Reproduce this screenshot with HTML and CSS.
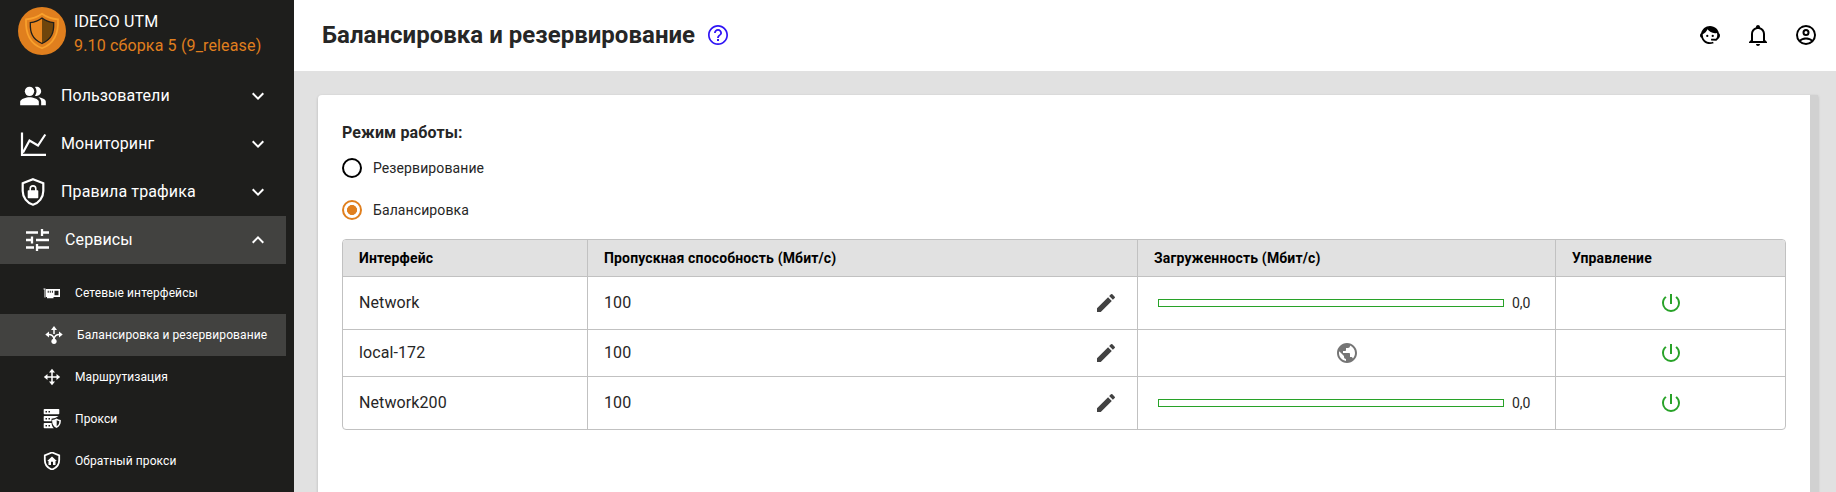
FILE: index.html
```
<!DOCTYPE html>
<html lang="ru">
<head>
<meta charset="utf-8">
<title>Балансировка и резервирование</title>
<link rel="stylesheet" href="styles.css">
</head>
<body>
<div class="app">
  <aside class="sidebar">
    <div class="brand">
      <svg class="logo" width="48" height="48" viewBox="0 0 48 48">
        <circle cx="24" cy="24" r="24" fill="#e07f1e"/>
        <path d="M24 6.800C19 10.500 14 12 8 12.300C7.500 23 9.500 36 24 41.300C38.500 36 40.500 23 40 12.300C34 12 29 10.500 24 6.800Z" fill="#e07f1e" stroke="#f9a12c" stroke-width="1.700"/>
        <path d="M24 11C20 14.200 16.500 15.300 12.300 15.700C12 25 14 32.500 24 36.500Z" fill="#e8861f"/>
        <path d="M24 11C28 14.200 31.500 15.300 35.700 15.700C36 25 34 32.500 24 36.500Z" fill="#6f450c"/>
        <path d="M24 11C20 14.200 16.500 15.300 12.300 15.700C12 25 14 32.500 24 36.500C34 32.500 36 25 35.700 15.700C31.500 15.300 28 14.200 24 11Z" fill="none" stroke="#1e1e1c" stroke-width="1.300"/>
      </svg>
      <div class="brand-text">
        <div class="brand-name">IDECO UTM</div>
        <div class="brand-version">9.10 сборка 5 (9_release)</div>
      </div>
    </div>
    <nav class="menu">
      <a class="item">
        <svg class="item-icon" viewBox="0 0 24 24"><path d="M16.670 13.130C18.040 14.060 19 15.320 19 17v3h4v-3c0-2.180-3.570-3.470-6.330-3.870zM15 12c2.210 0 4-1.790 4-4s-1.790-4-4-4c-.470 0-.910.100-1.330.240C14.500 5.270 15 6.580 15 8s-.5 2.730-1.330 3.760c.420.140.860.240 1.330.240z"/><circle cx="9" cy="8" r="4"/><path d="M9 13c-2.670 0-8 1.340-8 4v3h16v-3c0-2.660-5.330-4-8-4z"/></svg>
        <span class="item-label">Пользователи</span>
        <svg class="chevron" viewBox="0 0 24 24"><path d="M7.410 8.580L12 13.170l4.590-4.590L18 10l-6 6-6-6z"/></svg>
      </a>
      <a class="item">
        <svg class="item-icon" viewBox="0 0 28 28"><path class="line" d="M3 2.500V24.800H27M4 22.500L10.500 10.500L19 15.500L26.300 4.500" /></svg>
        <span class="item-label">Мониторинг</span>
        <svg class="chevron" viewBox="0 0 24 24"><path d="M7.410 8.580L12 13.170l4.590-4.590L18 10l-6 6-6-6z"/></svg>
      </a>
      <a class="item">
        <svg class="item-icon" viewBox="0 0 28 28"><path class="line" d="M14 1.300L24.300 5.300V13C24.300 19.500 20 25 14 26.800C8 25 3.700 19.500 3.700 13V5.300Z"/><path d="M18.500 12.200h-.9v-1.500a3.600 3.600 0 0 0-7.200 0v1.500h-.9a.8.8 0 0 0-.8.8v6.500c0 .5.300.8.8.8h9c.5 0 .8-.3.800-.8V13a.8.8 0 0 0-.8-.8zm-6.500 0v-1.500a2 2 0 0 1 4 0v1.500z"/></svg>
        <span class="item-label">Правила трафика</span>
        <svg class="chevron" viewBox="0 0 24 24"><path d="M7.410 8.580L12 13.170l4.590-4.590L18 10l-6 6-6-6z"/></svg>
      </a>
      <a class="item open">
        <svg class="item-icon tune" viewBox="0 0 28 28"><path class="line tune-line" d="M3 6.500h12M19 6.500h7M19 3v7M3 14h7M9 10.500v7M13 14h13M3 21.500h8M14 18v7M14 21.500h12"/></svg>
        <span class="item-label">Сервисы</span>
        <svg class="chevron" viewBox="0 0 24 24"><path d="M7.410 15.410L12 10.830l4.590 4.580L18 14l-6-6-6 6z"/></svg>
      </a>
    </nav>
    <nav class="submenu">
      <a class="sub">
        <svg class="sub-icon" viewBox="0 0 18 18"><path d="M.5 4.500h2v9H1.500v-8h-1z"/><path fill-rule="evenodd" d="M3 5h14v8h-6.500v1.200H4V13H3zM4.700 6.800v2h1v-2zM6.800 6.800v2h1v-2zM8.900 6.800v2h1v-2zM11.500 6.700v4.600h4V6.700z"/></svg>
        <span class="sub-label">Сетевые интерфейсы</span>
      </a>
      <a class="sub current">
        <svg class="sub-icon" viewBox="0 0 18 18"><path d="M9 0l3 4H6zM.3 8.500L4 5.500v6zM17.700 8.500L14 5.500v6z"/><path class="line thin" d="M9 3v5M3 8.500C6.500 8.300 9 10 9 14C9 10 11.500 8.300 15 8.500"/><circle cx="9" cy="15.300" r="2.600"/></svg>
        <span class="sub-label">Балансировка и резервирование</span>
      </a>
      <a class="sub">
        <svg class="sub-icon" viewBox="0 0 18 18"><path d="M9 .8l3 3.700H6zM9 17.200l3-3.700H6zM.8 9l3.700-3v6zM17.200 9l-3.700-3v6z"/><path class="line thin" d="M9 3v12M3 9h12"/></svg>
        <span class="sub-label">Маршрутизация</span>
      </a>
      <a class="sub">
        <svg class="sub-icon server" viewBox="0 0 18 20"><path fill-rule="evenodd" d="M1.500 0h14a.8.8 0 0 1 .8.8v3.700a.8.8 0 0 1-.8.800h-14a.8.8 0 0 1-.8-.8V.8A.8.8 0 0 1 1.500 0zM2.500 1.900v1.500H4V1.900zM5.500 1.900v1.500H7V1.900z"/><path fill-rule="evenodd" d="M1.500 7h14l-2 1.200c-2 1.200-4 1.200-5 1.600v2.500h-7a.8.8 0 0 1-.8-.8V7.800A.8.8 0 0 1 1.500 7zM2.500 8.900v1.500H4V8.900zM5.500 8.900v1.500H7V8.900zM1.500 14h7c.2 2.200 1 4 2.300 5.200h-9.300a.8.8 0 0 1-.8-.8v-3.600a.8.8 0 0 1 .8-.8zM2.500 15.900v1.500H4v-1.500zM5.500 15.900v1.500H7v-1.500z"/><path fill-rule="evenodd" d="M13.500 9.500c1.300.8 2.600 1.200 4.300 1.400.3 3.600-.8 6.500-4.300 8.100-3.500-1.600-4.600-4.500-4.300-8.100 1.700-.2 3-.6 4.300-1.400zm.2 1.700v6c1.900-1 2.600-2.700 2.600-5-.9-.2-1.800-.5-2.600-1z"/></svg>
        <span class="sub-label">Прокси</span>
      </a>
      <a class="sub">
        <svg class="sub-icon" viewBox="0 0 18 18"><path class="line shield" d="M9 .5L16.200 3.300V8C16.200 12.700 13 16.200 9 17.500C5 16.200 1.800 12.700 1.800 8V3.300Z"/><path d="M9 4.500L13.800 9h-1.300v4H10V9.800H8V13H5.500V9H4.200z"/></svg>
        <span class="sub-label">Обратный прокси</span>
      </a>
    </nav>
  </aside>

  <main class="main">
    <header class="topbar">
      <h1 class="title">Балансировка и резервирование</h1>
      <svg class="icon help" viewBox="0 0 24 24"><path d="M11 18h2v-2h-2v2zm1-16C6.480 2 2 6.480 2 12s4.480 10 10 10 10-4.480 10-10S17.520 2 12 2zm0 18.300c-4.600 0-8.300-3.700-8.300-8.300S7.400 3.700 12 3.700s8.300 3.700 8.300 8.300-3.700 8.300-8.300 8.300zM12 6c-2.210 0-4 1.790-4 4h1.800c0-1.200.9-2.200 2.200-2.200s2.200 1 2.200 2.200c0 2-3.100 1.800-3.100 5h1.800c0-2.200 3.100-2.500 3.100-5 0-2.210-1.790-4-4-4z"/></svg>
      <div class="actions">
        <svg class="icon" viewBox="0 0 24 24"><path d="M18.720 14.760C19.070 13.910 19.260 13 19.260 12C19.260 11.280 19.150 10.590 18.960 9.950C18.310 10.100 17.630 10.180 16.920 10.180C13.860 10.180 11.150 8.670 9.500 6.340C8.610 8.500 6.910 10.260 4.770 11.220C4.730 11.470 4.730 11.740 4.730 12A7.270 7.270 0 0 0 12 19.270C13.050 19.270 14.060 19.040 14.970 18.630C15.540 19.720 15.800 20.260 15.780 20.260C14.140 20.810 12.870 21.080 12 21.080C9.580 21.080 7.270 20.130 5.570 18.420C4.530 17.380 3.760 16.110 3.330 14.730Q2 14.400 2 12.500Q2 10.600 3.090 10.180C3.930 6.040 7.600 2.920 12 2.920C14.400 2.920 16.710 3.870 18.420 5.580C19.690 6.840 20.540 8.450 20.890 10.180Q22 10.600 22 12.500Q22 14.400 20.900 15.200L18.380 17.700L13.080 17.400V15.730H17.910Z"/><circle cx="9.270" cy="12.910" r="1.130"/><circle cx="14.720" cy="12.910" r="1.130"/></svg>
        <svg class="icon" viewBox="0 0 24 24"><path d="M10 21h4c0 1.100-.9 2-2 2s-2-.9-2-2zM21 19v1H3v-1l2-2v-6c0-3.100 2.030-5.830 5-6.710V4c0-1.100.9-2 2-2s2 .9 2 2v.290c2.970.880 5 3.610 5 6.710v6l2 2zm-4-8c0-2.760-2.240-5-5-5s-5 2.240-5 5v7h10v-7z"/></svg>
        <svg class="icon" viewBox="0 0 24 24"><path fill-rule="evenodd" d="M12 2a10 10 0 1 0 0 20 10 10 0 0 0 0-20zM7.070 18.280c.430-.9 3.050-1.780 4.930-1.780s4.510.880 4.930 1.780A7.900 7.900 0 0 1 12 20c-1.860 0-3.570-.640-4.930-1.720zm11.290-1.450c-1.430-1.740-4.900-2.330-6.360-2.330s-4.930.590-6.360 2.330A7.950 7.950 0 0 1 4 12c0-4.410 3.590-8 8-8s8 3.590 8 8c0 1.820-.620 3.490-1.640 4.830zM12 6a3.500 3.500 0 1 0 0 7 3.500 3.500 0 0 0 0-7zm0 5a1.500 1.500 0 1 1 0-3 1.500 1.500 0 0 1 0 3z"/></svg>
      </div>
    </header>
    <div class="content">
      <section class="card">
        <h2 class="mode-title">Режим работы:</h2>
        <div class="radio"><span class="dot"></span>Резервирование</div>
        <div class="radio"><span class="dot checked"></span>Балансировка</div>
        <div class="table">
          <div class="row head">
            <div class="cell">Интерфейс</div><div class="cell">Пропускная способность (Мбит/с)</div><div class="cell">Загруженность (Мбит/с)</div><div class="cell">Управление</div>
          </div>
          <div class="row">
            <div class="cell"><span class="value">Network</span></div>
            <div class="cell speed"><span class="value">100</span><svg class="icon edit" viewBox="0 0 24 24"><path d="M3 17.250V21h3.750L17.810 9.940l-3.750-3.750L3 17.250zM20.710 7.040a1 1 0 0 0 0-1.410l-2.340-2.340a1 1 0 0 0-1.410 0l-1.830 1.830 3.750 3.750 1.830-1.830z"/></svg></div>
            <div class="cell load"><span class="bar"></span>0,0</div>
            <div class="cell control"><svg class="icon power" viewBox="0 0 24 24"><path d="M13 3h-2v10h2V3zm4.830 2.170l-1.420 1.420A6.920 6.920 0 0 1 19 12c0 3.870-3.130 7-7 7s-7-3.130-7-7c0-2.190 1.010-4.140 2.580-5.420L6.170 5.170A8.930 8.930 0 0 0 3 12a9 9 0 0 0 18 0c0-2.740-1.230-5.180-3.170-6.830z"/></svg></div>
          </div>
          <div class="row short">
            <div class="cell"><span class="value">local-172</span></div>
            <div class="cell speed"><span class="value">100</span><svg class="icon edit" viewBox="0 0 24 24"><path d="M3 17.250V21h3.750L17.810 9.940l-3.750-3.750L3 17.250zM20.710 7.040a1 1 0 0 0 0-1.410l-2.340-2.340a1 1 0 0 0-1.410 0l-1.830 1.830 3.750 3.750 1.830-1.830z"/></svg></div>
            <div class="cell control"><svg class="icon globe" viewBox="0 0 24 24"><path d="M12 2C6.480 2 2 6.480 2 12s4.480 10 10 10 10-4.480 10-10S17.520 2 12 2zm-1 17.930c-3.950-.490-7-3.850-7-7.930 0-.620.080-1.210.210-1.790L9 15v1c0 1.100.9 2 2 2v1.930zm6.900-2.540c-.260-.810-1-1.390-1.900-1.390h-1v-3c0-.550-.450-1-1-1H8v-2h2c.550 0 1-.450 1-1V7h2c1.100 0 2-.9 2-2v-.410c2.930 1.190 5 4.060 5 7.410 0 2.080-.8 3.970-2.100 5.390z"/></svg></div>
            <div class="cell control"><svg class="icon power" viewBox="0 0 24 24"><path d="M13 3h-2v10h2V3zm4.830 2.170l-1.420 1.420A6.920 6.920 0 0 1 19 12c0 3.870-3.130 7-7 7s-7-3.130-7-7c0-2.190 1.010-4.140 2.580-5.420L6.170 5.170A8.930 8.930 0 0 0 3 12a9 9 0 0 0 18 0c0-2.740-1.230-5.180-3.170-6.830z"/></svg></div>
          </div>
          <div class="row">
            <div class="cell"><span class="value">Network200</span></div>
            <div class="cell speed"><span class="value">100</span><svg class="icon edit" viewBox="0 0 24 24"><path d="M3 17.250V21h3.750L17.810 9.940l-3.750-3.750L3 17.250zM20.710 7.040a1 1 0 0 0 0-1.410l-2.340-2.340a1 1 0 0 0-1.410 0l-1.830 1.830 3.750 3.750 1.830-1.830z"/></svg></div>
            <div class="cell load"><span class="bar"></span>0,0</div>
            <div class="cell control"><svg class="icon power" viewBox="0 0 24 24"><path d="M13 3h-2v10h2V3zm4.830 2.170l-1.420 1.420A6.920 6.920 0 0 1 19 12c0 3.870-3.130 7-7 7s-7-3.130-7-7c0-2.190 1.010-4.140 2.580-5.420L6.170 5.170A8.930 8.930 0 0 0 3 12a9 9 0 0 0 18 0c0-2.740-1.230-5.180-3.170-6.830z"/></svg></div>
          </div>
        </div>
      </section>
    </div>
  </main>
</div>
</body>
</html>
```
FILE: styles.css
```
* { box-sizing: border-box; }
body { margin: 0; font-family: Roboto, sans-serif; color: #262626; }
svg { display: block; flex: none; }
.app { display: flex; width: 1836px; height: 492px; overflow: hidden; }

.sidebar { flex: none; width: 294px; padding-right: 8px; background: #1e1e1c; color: #fff; }
.brand { display: flex; height: 72px; padding: 7px 0 0 18px; gap: 8px; }
.brand-text { padding-top: 3px; font-size: 16px; line-height: 24px; letter-spacing: .12px; white-space: nowrap; }
.brand-version { color: #e07f1e; letter-spacing: .15px; }
.item { display: flex; align-items: center; height: 48px; padding: 0 16px 0 19px; font-size: 16px; letter-spacing: .12px; }
.item-icon { width: 28px; height: 28px; fill: #fff; }
.item-label { flex: 1; padding: 0 0 2px 14px; }
.chevron { width: 24px; height: 24px; fill: #fff; }
.line { fill: none; stroke: #fff; stroke-width: 2.200; }
.open { padding-left: 23px; background: #424240; }
.tune-line { stroke-width: 2.300; }
.submenu { padding-top: 8px; }
.sub { display: flex; align-items: center; height: 42px; padding-left: 43px; gap: 14px; font-size: 12px; letter-spacing: .1px; white-space: nowrap; }
.sub-label { padding-bottom: 1px; }
.sub-icon { width: 18px; height: 18px; fill: #fff; }
.server { height: 20px; }
.thin { stroke-width: 1.500; }
.shield { stroke-width: 1.800; }
.current { padding-left: 45px; background: #424240; }

.main { flex: 1; display: flex; flex-direction: column; min-width: 0; background: #e1e1e1; }
.topbar { display: flex; align-items: center; flex: none; height: 71px; padding: 0 18px 1px 28px; background: #fff; }
.title { margin: 0; font-size: 24px; font-weight: 700; line-height: 32px; letter-spacing: .02px; white-space: nowrap; }
.icon { width: 24px; height: 24px; fill: #000; }
.help { margin-left: 11px; fill: #2f14f5; }
.actions { display: flex; gap: 24px; margin-left: auto; }
.content { flex: 1; padding: 24px 18px 0 24px; }
.card { height: 440px; padding: 25px 24px 0; background: #fff; border-right: 8px solid #d1d1d1; border-top-left-radius: 4px; box-shadow: 0 1px 3px rgba(0,0,0,.2); }
.mode-title { margin: 0 0 7px; font-size: 16px; font-weight: 700; line-height: 26px; letter-spacing: .12px; }
.radio { display: flex; align-items: center; height: 30px; margin-bottom: 12px; gap: 11px; font-size: 14px; letter-spacing: .1px; }
.dot { width: 20px; height: 20px; border: 2px solid #000; border-radius: 50%; }
.checked { border-color: #e07f1e; background: radial-gradient(circle, #e07f1e 4.700px, transparent 5.300px); }

.table { margin-top: 14px; border: 1px solid #c1c1c1; border-radius: 4px; overflow: hidden; }
.row { display: grid; grid-template-columns: 245px 550px 418px 1fr; height: 53px; border-bottom: 1px solid #c1c1c1; font-size: 16px; }
.row:last-child { height: 52px; border-bottom: 0; }
.short { height: 47px; }
.head { height: 37px; background: #e1e1e1; color: #000; font-size: 14px; font-weight: 700; letter-spacing: .15px; }
.cell { display: flex; align-items: center; padding: 0 16px; border-right: 1px solid #c1c1c1; white-space: nowrap; }
.cell:last-child { border-right: 0; }
.value { padding-bottom: 2px; letter-spacing: .1px; }
.speed { justify-content: space-between; padding-right: 19px; }
.edit { fill: #424242; }
.load { padding-left: 20px; gap: 8px; font-size: 14px; }
.bar { width: 346px; height: 8px; border: 1px solid #28a228; }
.control { justify-content: center; padding: 0 0 0 1px; }
.power { fill: #28a228; }
.globe { fill: #757575; }
```
